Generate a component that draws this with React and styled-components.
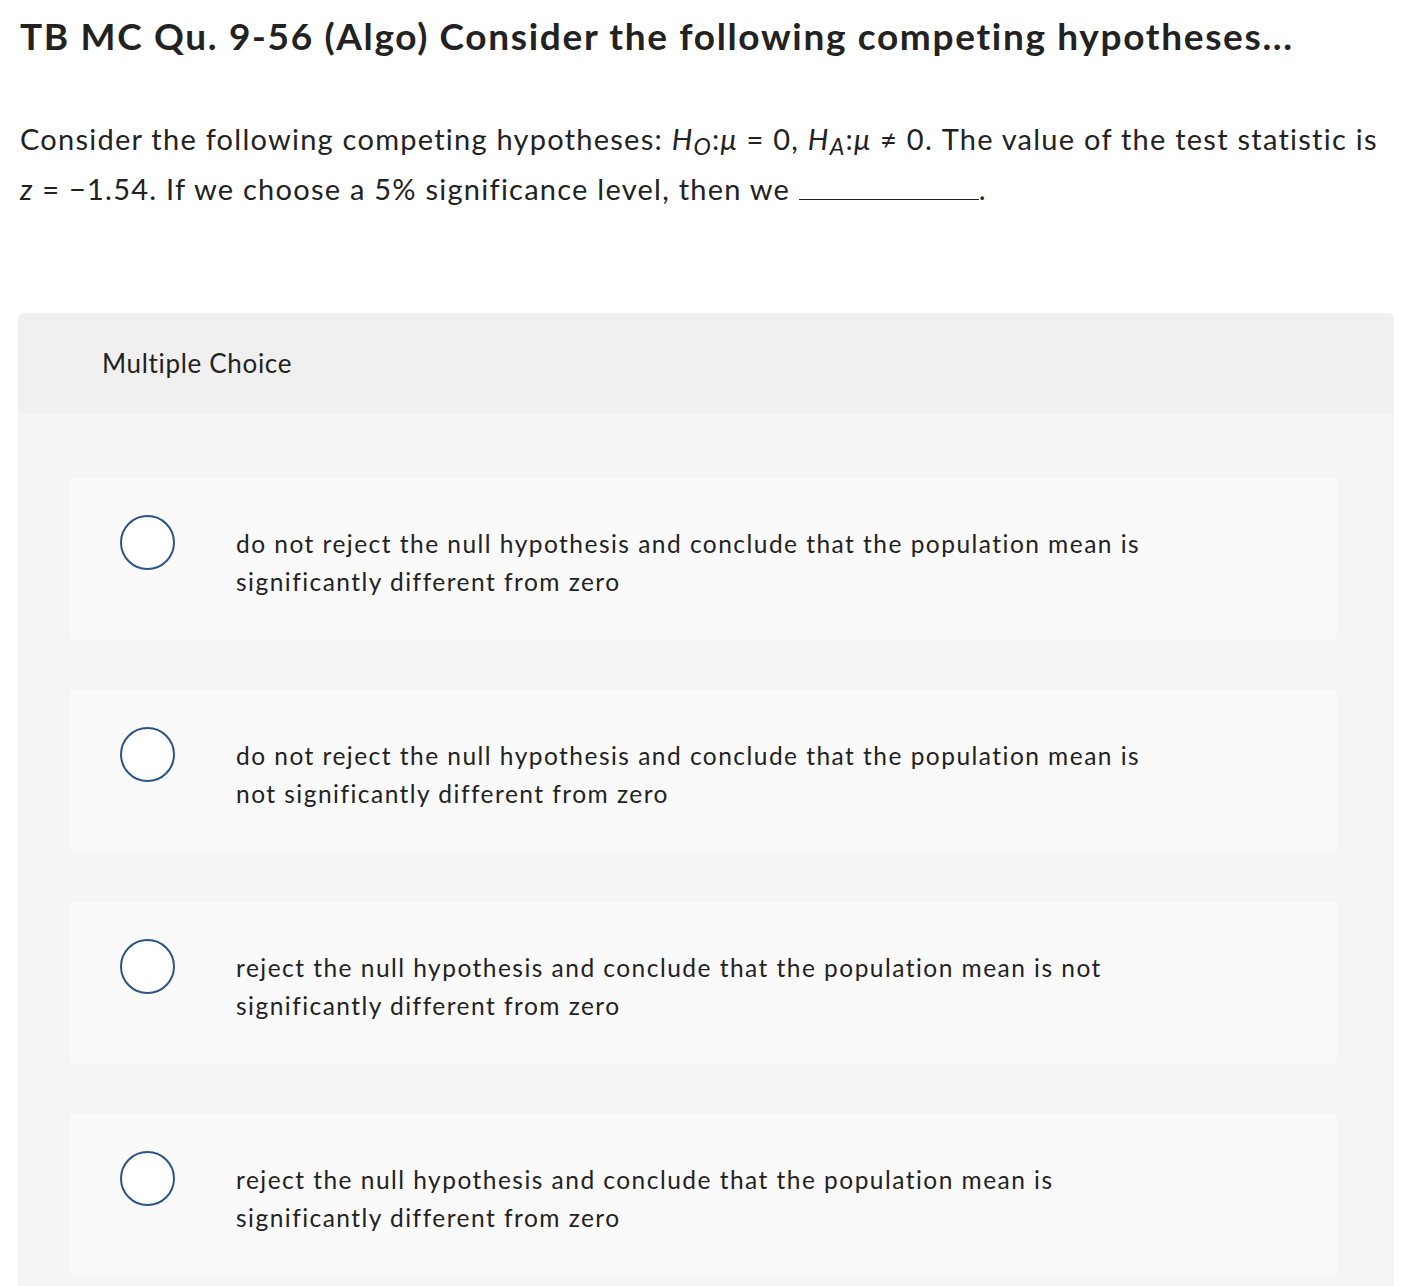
import React from "react";
import styled, { createGlobalStyle } from "styled-components";

const Global = createGlobalStyle`
  html, body { margin: 0; padding: 0; background: #ffffff; }
  body { font-family: "Lato", "Liberation Sans", sans-serif; color: #222222; }
  * { box-sizing: border-box; }
`;

const Page = styled.div`
  padding: 0 26px 0 18px;
`;

const Title = styled.h1`
  margin: 0;
  padding: 14px 0 0 2px;
  font-size: 37px;
  line-height: 44px;
  font-weight: 700;
  letter-spacing: 0.045em;
  color: #222222;
`;

const Question = styled.p`
  margin: 56px 0 0;
  padding-left: 2px;
  font-size: 29px;
  line-height: 50px;
  letter-spacing: 0.043em;
  color: #222222;
`;

const Var = styled.i`
  font-style: italic;
`;

const Sub = styled.span`
  display: inline-block;
  font-style: italic;
  font-size: 0.8em;
  transform: translateY(0.22em);
  line-height: 1;
`;

const Blank = styled.span`
  display: inline-block;
  width: 180px;
  border-bottom: 1.5px solid #222222;
  vertical-align: baseline;
`;

const Panel = styled.section`
  margin-top: 99px;
  border-radius: 6px 6px 0 0;
  overflow: hidden;
  background: #f5f5f5;
`;

const PanelHeader = styled.div`
  height: 100px;
  display: flex;
  align-items: center;
  padding-left: 84px;
  background: #f0f0f0;
  font-size: 26px;
  letter-spacing: 0.026em;
  color: #222222;
`;

const Options = styled.div`
  display: flex;
  flex-direction: column;
  gap: 49px;
  padding: 64px 57px 30px 52px;
`;

const Card = styled.label`
  display: flex;
  align-items: flex-start;
  min-height: 163px;
  padding: 38px 40px 30px 50px;
  background: #fafafa;
  border-radius: 6px;
`;

const Radio = styled.span`
  flex: none;
  width: 55px;
  height: 55px;
  border-radius: 50%;
  border: 2px solid #2c5487;
  background: #ffffff;
`;

const OptionText = styled.span`
  margin: 10px 0 0 61px;
  max-width: 935px;
  font-size: 24.5px;
  line-height: 38px;
  letter-spacing: 0.06em;
  color: #222222;
`;

const options = [
  "do not reject the null hypothesis and conclude that the population mean is significantly different from zero",
  "do not reject the null hypothesis and conclude that the population mean is not significantly different from zero",
  "reject the null hypothesis and conclude that the population mean is not significantly different from zero",
  "reject the null hypothesis and conclude that the population mean is significantly different from zero",
];

export default function App() {
  return (
    <>
      <Global />
      <Page>
        <Title>TB MC Qu. 9-56 (Algo) Consider the following competing hypotheses...</Title>
        <Question>
          Consider the following competing hypotheses: <Var>H</Var>
          <Sub>O</Sub>:<Var>μ</Var> = 0, <Var>H</Var>
          <Sub>A</Sub>:<Var>μ</Var> ≠ 0. The value of the test statistic is <Var>z</Var> = −1.54. If
          we choose a 5% significance level, then we <Blank />.
        </Question>
        <Panel>
          <PanelHeader>Multiple Choice</PanelHeader>
          <Options>
            {options.map((t) => (
              <Card key={t}>
                <Radio />
                <OptionText>{t}</OptionText>
              </Card>
            ))}
          </Options>
        </Panel>
      </Page>
    </>
  );
}
